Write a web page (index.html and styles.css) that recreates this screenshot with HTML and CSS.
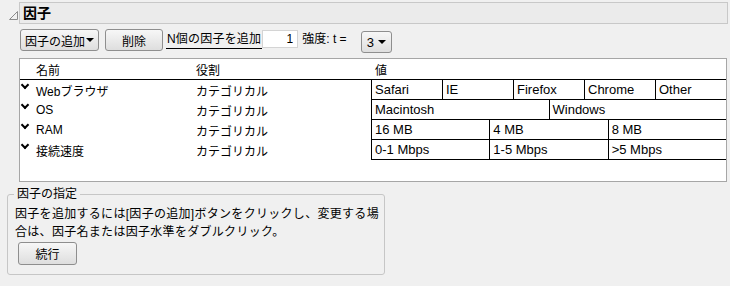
FILE: index.html
```html
<!DOCTYPE html>
<html lang="ja">
<head>
    <meta charset="UTF-8">
    <title>因子</title>
    <link rel="stylesheet" href="styles.css">
</head>
<body>
    <div class="outline">
        <div class="outline-head">
            <svg class="disclose" width="19" height="22" viewBox="0 0 19 22">
                <path d="M9.5 17.5 L17.5 9.5 L17.5 17.5 Z" fill="none" stroke="#8a8a8a" stroke-width="1"/>
            </svg>
            <div class="outline-title">因子</div>
        </div>

        <div class="outline-body">
            <div class="toolbar">
                <button class="btn btn-menu">因子の追加 <span class="arrow"></span></button>
                <button class="btn btn-delete">削除</button>
                <span class="n-label">N個の因子を追加</span>
                <input class="n-input" type="text" value="1">
                <span class="strength">強度: t =</span>
                <button class="btn btn-combo">3 <span class="arrow"></span></button>
            </div>

            <div class="factor-panel">
                <div class="factor-grid">
                    <div class="head name-col">名前</div>
                    <div class="head">役割</div>
                    <div class="head value-head">値</div>

                    <div class="name-col"><span class="chev"></span>Webブラウザ</div>
                    <div>カテゴリカル</div>
                    <div class="levels">
                        <span>Safari</span><span>IE</span><span>Firefox</span><span>Chrome</span><span>Other</span>
                    </div>

                    <div class="name-col"><span class="chev"></span>OS</div>
                    <div>カテゴリカル</div>
                    <div class="levels">
                        <span>Macintosh</span><span>Windows</span>
                    </div>

                    <div class="name-col"><span class="chev"></span>RAM</div>
                    <div>カテゴリカル</div>
                    <div class="levels">
                        <span>16 MB</span><span>4 MB</span><span>8 MB</span>
                    </div>

                    <div class="name-col"><span class="chev"></span>接続速度</div>
                    <div>カテゴリカル</div>
                    <div class="levels">
                        <span>0-1 Mbps</span><span>1-5 Mbps</span><span>&gt;5 Mbps</span>
                    </div>
                </div>
            </div>
        </div>
    </div>

    <fieldset class="spec">
        <legend>因子の指定</legend>
        <p>因子を追加するには[因子の追加]ボタンをクリックし、変更する場<br>合は、因子名または因子水準をダブルクリック。</p>
        <button class="btn btn-continue">続行</button>
    </fieldset>
</body>
</html>
```

FILE: styles.css
```css
body {
    margin: 0;
    background-color: #f0f0f0;
    font-family: "Liberation Sans", "Noto Sans CJK JP", sans-serif;
    font-size: 12px;
    color: #000;
}

.outline {
    padding-top: 2px;
}

.outline-head {
    display: flex;
    margin-right: 2px;
}

.disclose {
    flex: none;
    display: block;
}

.outline-title {
    flex: 1;
    height: 20px;
    line-height: 20px;
    padding-left: 3px;
    background-color: #ebebeb;
    border: 1px solid #c8c8c8;
    font-size: 14px;
    font-weight: bold;
}

.outline-body {
    padding-left: 19px;
    margin-right: 3px;
}

.toolbar {
    display: flex;
    align-items: flex-start;
    margin-top: 5px;
    height: 24px;
}

.btn {
    font-family: inherit;
    font-size: 12px;
    color: #000;
    height: 22px;
    padding: 0 6px;
    background: linear-gradient(#f7f7f7, #dedede);
    border: 1px solid #8e8e8e;
    border-radius: 3px;
    display: flex;
    align-items: center;
    justify-content: center;
}

.btn-menu {
    width: 79px;
    margin-left: 1px;
    padding: 0 4px;
    justify-content: space-between;
}

.btn-delete {
    width: 58px;
    margin-left: 6px;
}

.arrow {
    display: inline-block;
    width: 0;
    height: 0;
    border-left: 4px solid transparent;
    border-right: 4px solid transparent;
    border-top: 4px solid #000;
}

.n-label {
    margin-left: 3px;
    margin-top: 1px;
    padding: 0 1px;
    height: 18px;
    line-height: 18px;
    border-bottom: 1px solid #000;
    font-size: 12px;
    letter-spacing: 0.2px;
}

.n-input {
    width: 36px;
    height: 18px;
    margin-top: 1px;
    padding: 0 4px;
    box-sizing: border-box;
    border: 1px solid #d4d4d4;
    background: #fff;
    font-family: inherit;
    font-size: 12px;
    text-align: right;
}

.strength {
    margin-left: 4px;
    margin-top: 1px;
    line-height: 18px;
}

.btn-combo {
    width: 31px;
    margin-left: 14px;
    margin-top: 2px;
    padding: 0 5px;
    justify-content: space-between;
    font-size: 13px;
}

.factor-panel {
    margin-top: 5px;
    height: 122px;
    background-color: #fff;
    border: 1px solid #a6a6a6;
}

.factor-grid {
    display: grid;
    grid-template-columns: 176px 175px 1fr;
    grid-auto-rows: 20px;
    grid-template-rows: 21px;
}

.factor-grid > div {
    height: 100%;
    display: flex;
    align-items: center;
    white-space: nowrap;
}

.factor-grid .head {
    border-bottom: 1px solid #000;
    box-sizing: border-box;
    padding-top: 1px;
}

.factor-grid .name-col {
    padding-left: 16px;
}

.value-head {
    padding-left: 4px;
}

.chev {
    position: relative;
    width: 16px;
    margin-left: -16px;
    height: 100%;
}

.chev::before {
    content: "";
    position: absolute;
    left: 2px;
    top: 2px;
    width: 4px;
    height: 4px;
    border-right: 2px solid #000;
    border-bottom: 2px solid #000;
    transform: rotate(45deg);
}

.levels {
    align-items: stretch;
}

.levels span {
    flex: 1;
    min-width: 0;
    padding-left: 3px;
    border-left: 1px solid #000;
    border-bottom: 1px solid #000;
    line-height: 19px;
    font-size: 13px;
}

.spec {
    margin: 4px 0 0 7px;
    width: 368px;
    height: 80px;
    padding: 3px 1px 4px 7px;
    border: 1px solid #c6c6c6;
    border-radius: 3px;
}

.spec legend {
    padding: 0 3px;
    margin-left: -1px;
    line-height: 16px;
}

.spec p {
    margin: 0;
    line-height: 18px;
    letter-spacing: 0.3px;
    white-space: nowrap;
}

.btn-continue {
    width: 59px;
    height: 23px;
    margin-top: 1px;
    margin-left: 3px;
}
```
